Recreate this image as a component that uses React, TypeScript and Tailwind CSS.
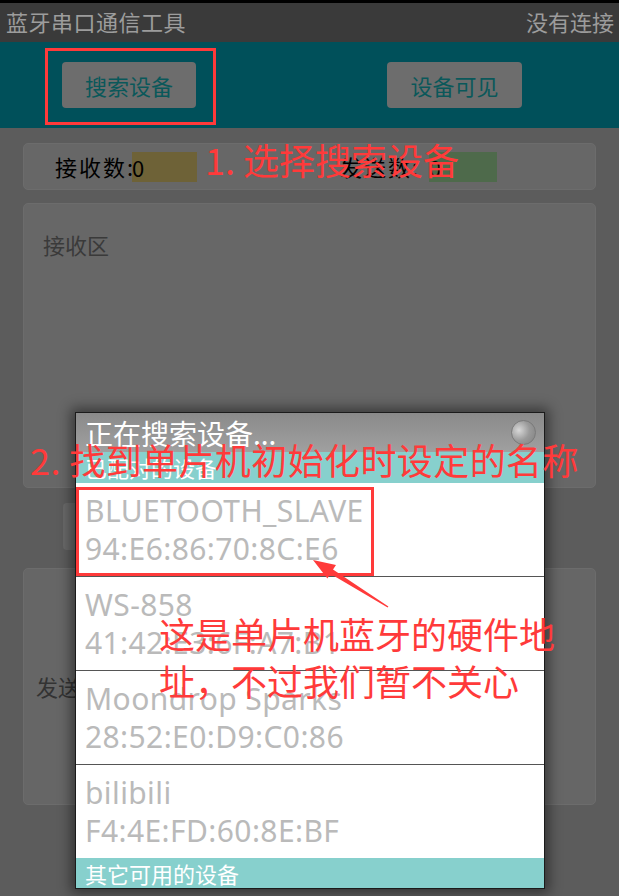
import React from "react";

const cjk = "font-['Noto_Sans_CJK_SC',sans-serif]";

function Item({ name, addr }: { name: string; addr: string }) {
  return (
    <div className="h-[93px] flex flex-col justify-center pl-[9px] bg-white text-[#bababa] text-[30px] tracking-[0.4px] leading-[38px] font-['Noto_Sans','Noto_Sans_CJK_SC',sans-serif]">
      <div>{name}</div>
      <div>{addr}</div>
    </div>
  );
}

export default function App() {
  return (
    <div className={`relative w-[619px] h-[896px] overflow-hidden bg-[#5c5c5c] ${cjk}`}>
      <div className="h-[3px] bg-black" />
      <div className="h-[39px] bg-[#3a3a3a] flex items-center justify-between pl-[6px] pr-[5px] text-[22px] leading-[30px] text-[#9c9c9c] pb-[4px]">
        <span className="tracking-[0.5px]">蓝牙串口通信工具</span>
        <span>没有连接</span>
      </div>
      <div className="h-[86px] bg-[#00505a] flex items-center">
        <div className="ml-[62px] w-[134px] h-[46px] rounded-[4px] bg-[#6d6d6d] flex items-center justify-center text-[22px] text-[#0a585a]">搜索设备</div>
        <div className="ml-[191px] w-[135px] h-[46px] rounded-[4px] bg-[#6d6d6d] flex items-center justify-center text-[22px] text-[#0a585a]">设备可见</div>
      </div>
      <div className="px-[23px] pt-[15px]">
        <div className="h-[47px] rounded-[5px] bg-[#676767] border border-[#6c6c6c] flex items-center pl-[31px] text-[22px] text-black">
          <span className="w-[77px] tracking-[2px] whitespace-nowrap">接收数:</span>
          <div className="w-[65px] h-[30px] bg-[#6e6237] leading-[30px]">0</div>
          <span className="ml-[143px] w-[89px] tracking-[2px] whitespace-nowrap">发送数: </span>
          <div className="w-[68px] h-[30px] bg-[#4e6a4b] leading-[30px]">0</div>
        </div>
        <div className="mt-[13px] h-[285px] rounded-[5px] bg-[#676767] border border-[#6c6c6c] pl-[19px] pt-[25px] text-[22px] leading-[30px] text-[#3a3a3a]">
          接收区
        </div>
        <div className="mt-[15px] h-[47px] flex">
          <div className="ml-[40px] w-[140px] h-[47px] rounded-[4px] bg-[#696969]" />
        </div>
        <div className="mt-[18px] h-[237px] rounded-[5px] bg-[#666666] border border-[#6c6c6c] flex items-center pl-[12px] text-[22px] text-[#333333]">
          <span>发送区</span>
          <div className="ml-[12px] self-stretch my-[6px] flex-1 border-l border-[#6a6a6a]" />
        </div>
      </div>

      {/* dialog */}
      <div className="absolute left-[75px] top-[412px] w-[470px] border border-[#1b1b1b] shadow-[0_0_12px_4px_rgba(0,0,0,0.45)] bg-white">
        <div className="h-[39px] bg-gradient-to-b from-[#8a8a8a] to-[#a0a0a0] flex items-center justify-between pl-[9px] pr-[8px]">
          <span className="text-[28px] leading-[34px] text-white">正在搜索设备...</span>
          <div className="w-[25px] h-[25px] rounded-full border border-[#7a7a7a] bg-[radial-gradient(circle_at_30%_40%,#d8d8d8,#9a9a9a_50%,#808080)]" />
        </div>
        <div className="h-[31px] bg-[#87d0cd] pl-[9px] text-[22px] leading-[31px] text-white">已配对的设备</div>
        <Item name="BLUETOOTH_SLAVE" addr="94:E6:86:70:8C:E6" />
        <div className="h-px bg-[#555]" />
        <Item name="WS-858" addr="41:42:E3:6F:A7:B1" />
        <div className="h-px bg-[#555]" />
        <Item name="Moondrop Sparks" addr="28:52:E0:D9:C0:86" />
        <div className="h-px bg-[#555]" />
        <Item name="bilibili" addr="F4:4E:FD:60:8E:BF" />
        <div className="h-[30px] bg-[#87d0cd] pl-[9px] text-[22px] leading-[30px] text-white">其它可用的设备</div>
      </div>

      {/* annotations */}
      <div className="absolute left-[45px] top-[48px] w-[171px] h-[77px] border-[3px] border-[#ff3a3a]" />
      <div className="absolute left-[76px] top-[487px] w-[298px] h-[89px] border-[3px] border-[#ff3a3a]" />
      <div className="absolute left-[205px] top-[137px] text-[36px] leading-[44px] text-[#ff3a3a] whitespace-nowrap">1. 选择搜索设备</div>
      <div className="absolute left-[30px] top-[437px] text-[36px] tracking-[0.4px] leading-[44px] text-[#ff3a3a] whitespace-nowrap">2. 找到单片机初始化时设定的名称</div>
      <div className="absolute left-[159px] top-[610px] w-[400px] text-[36px] leading-[47px] text-[#ff3a3a]">
        <div className="whitespace-nowrap">这是单片机蓝牙的硬件地</div>
        <div className="whitespace-nowrap">址，不过我们暂不关心</div>
      </div>
      <svg className="absolute left-0 top-0 pointer-events-none" width="619" height="896">
        <polygon
          points="313,560 336,565 333,569.6 388.4,606.5 387.6,607.5 330.3,573.8 327.4,578.5"
          fill="#ff3a3a"
        />
      </svg>
    </div>
  );
}
